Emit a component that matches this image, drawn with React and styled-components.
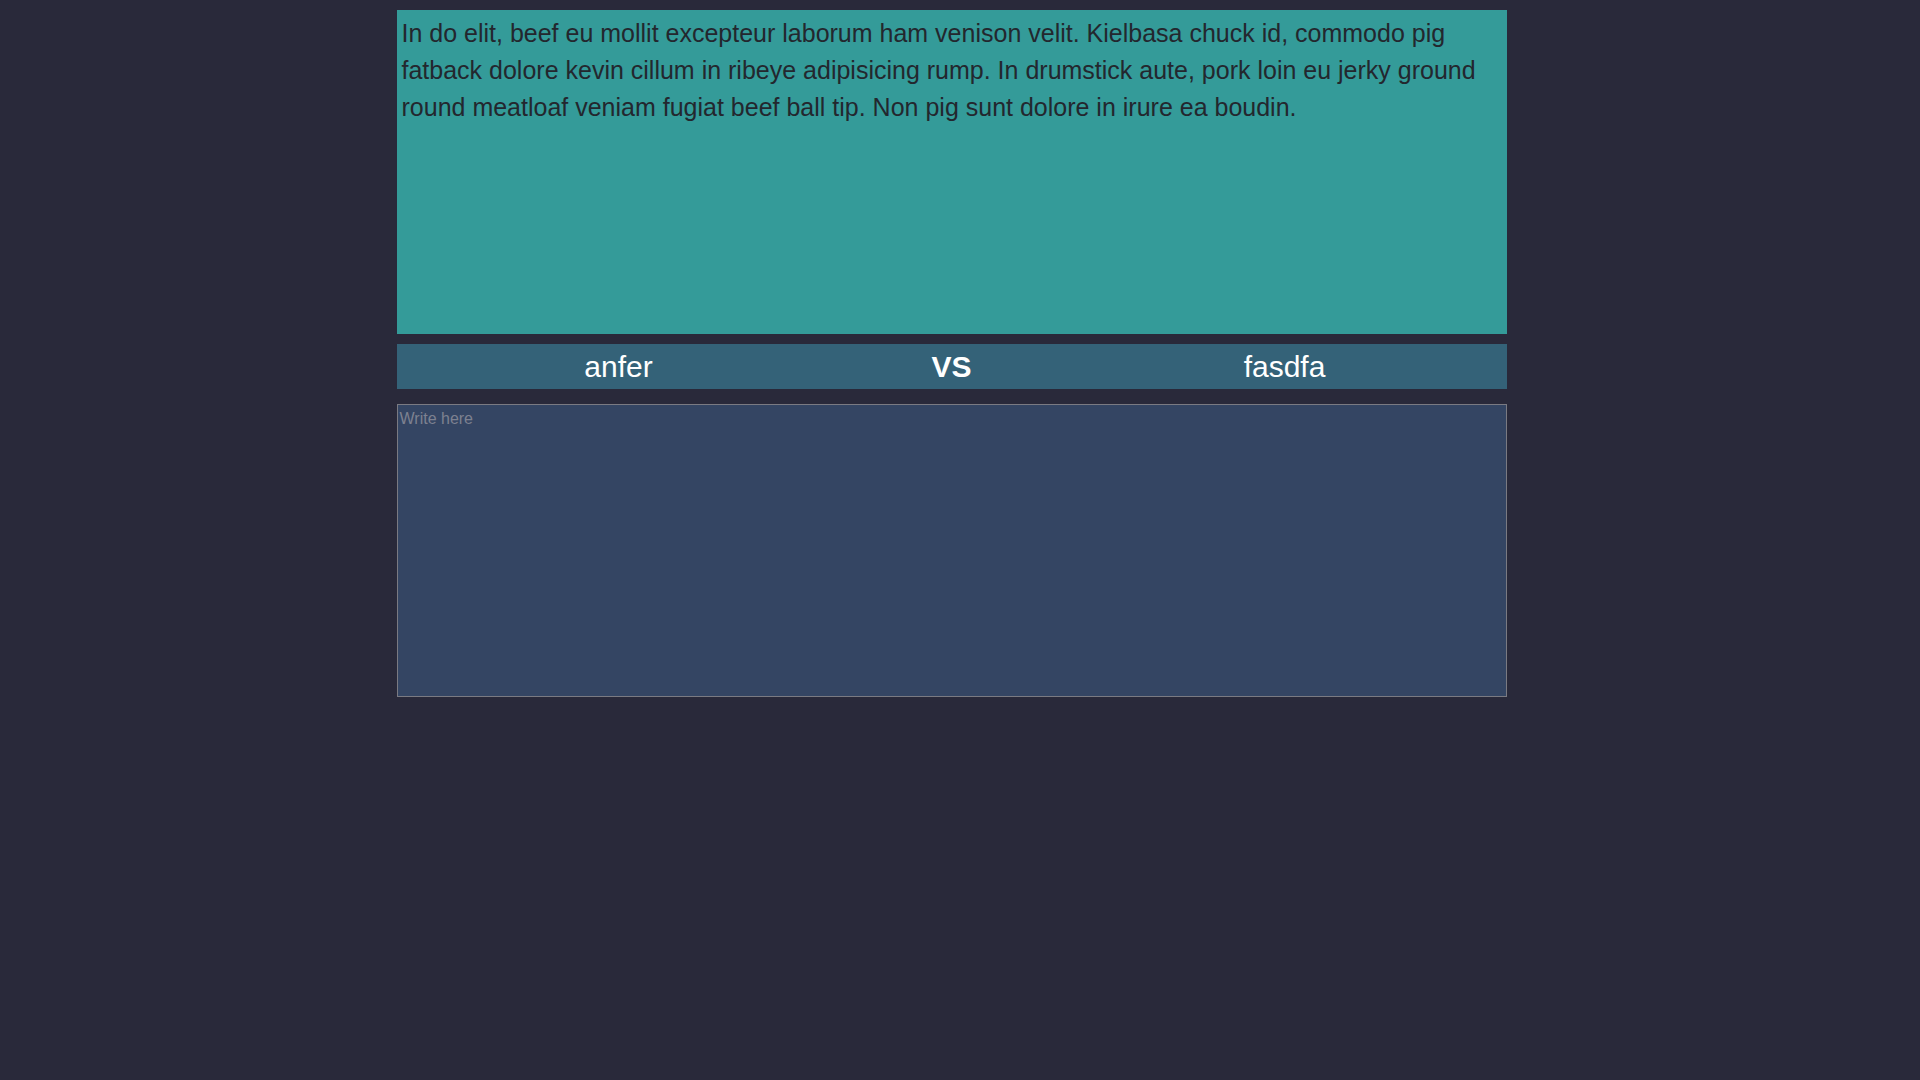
import React from 'react';
import styled, { createGlobalStyle } from 'styled-components';

const GlobalStyle = createGlobalStyle`
  html, body {
    background: #29293a;
  }
  body {
    margin: 8px;
    font-family: "Liberation Sans", Arial, sans-serif;
  }
`

// right padding stands in for the 17px scrollbar gutter of the original page
const Page = styled.div`
  min-height: 100vh;
  padding: 2px 17px 0 0;
  box-sizing: border-box;
`

const Layout = styled.div`
  width: 1110px;
  margin: 0 auto;
  display: flex;
  flex-direction: column;
`

const Story = styled.div`
  height: 324px;
  box-sizing: border-box;
  background: #349b99;
  padding: 5px 5px;
  color: #23272e;
  font-size: 25px;
  line-height: 37px;
`

const Versus = styled.div`
  margin-top: 10px;
  height: 45px;
  background: #346278;
  display: flex;
  justify-content: center;
  align-items: center;
`

const Player = styled.div`
  width: 30%;
  text-align: center;
  color: #fff;
  font-size: 30px;
  font-weight: ${p => (p.$bold ? 700 : 400)};
`

const Writer = styled.textarea`
  margin-top: 15px;
  width: 1110px;
  height: 293px;
  box-sizing: border-box;
  background: #344563;
  border: 1px solid #7a7a82;
  padding: 5px 2px;
  color: #ddd;
  font-family: "Liberation Sans", Arial, sans-serif;
  font-size: 16px;
  resize: none;
  outline: none;

  &::placeholder {
    color: #7d8190;
  }
`

function App() {
  return (
    <Page>
      <GlobalStyle />
      <Layout>
        <Story>
          In do elit, beef eu mollit excepteur laborum ham venison velit. Kielbasa chuck id, commodo pig
          fatback dolore kevin cillum in ribeye adipisicing rump. In drumstick aute, pork loin eu jerky ground
          round meatloaf veniam fugiat beef ball tip. Non pig sunt dolore in irure ea boudin.
        </Story>
        <Versus>
          <Player>anfer</Player>
          <Player $bold>VS</Player>
          <Player>fasdfa</Player>
        </Versus>
        <Writer placeholder="Write here" />
      </Layout>
    </Page>
  )
}

export default App
